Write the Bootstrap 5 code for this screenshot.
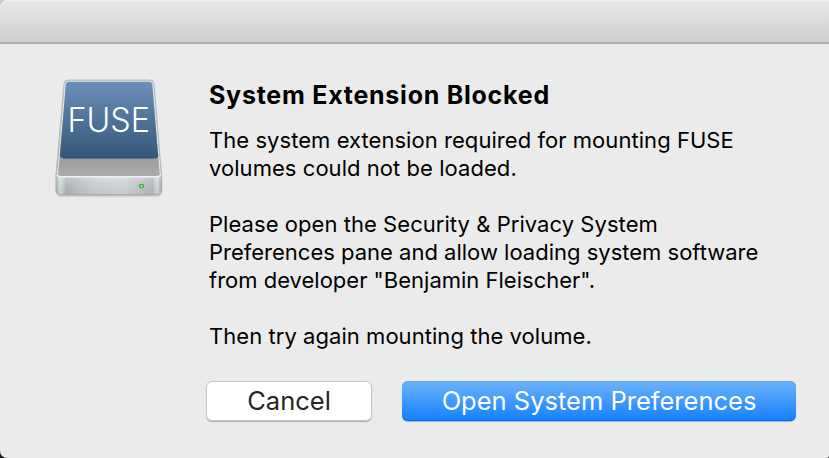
<!DOCTYPE html>
<html lang="en">
<head>
<meta charset="utf-8">
<meta name="viewport" content="width=device-width, initial-scale=1">
<title>System Extension Blocked</title>
<link href="https://cdn.jsdelivr.net/npm/bootstrap@5.3.0/dist/css/bootstrap.min.css" rel="stylesheet">
<style>
body{background:#1b1c24;font-family:Inter,"Liberation Sans",sans-serif;color:#000}
.dialog-window{height:458px;background:#ebebeb;border-radius:7px 0 2px 7px}
.title-strip{height:44px;flex:none;background:linear-gradient(#f4f3f4 0,#e8e6e8 2px,#d1cfd1 41px,#d1cfd1 42px,#b1afb1 42px,#b1afb1 44px)}
.corner-back{background:linear-gradient(#c8c8c8 50%,#1b1c24 50%)}
.dialog-body{padding:32px 33px 0 50px}
.drive-icon{width:118px;height:126px;flex:none}
.message{margin-left:41px;padding-top:4px}
.heading{font-size:25px;line-height:30px;font-weight:700;letter-spacing:.75px;margin:0 0 16px;white-space:nowrap}
.copy{font-size:22px;line-height:28px;letter-spacing:.05px;margin:0 0 28px;white-space:nowrap}
.copy span{display:block}
.copy .snug{letter-spacing:0}
.actions{margin:31px 33px 0 206px;gap:30px}
.btn-mac{height:40px;padding:0;border:0;border-radius:6px;font-size:25.5px;line-height:40px}
.btn-cancel,.btn-cancel:hover{width:166px;background:#fff;color:#262626;box-shadow:inset 0 0 0 1px #c6c6c6,0 1px 1px #aaa}
.btn-open,.btn-open:hover{width:394px;color:#fff;background:linear-gradient(#6cb3fa,#1480ff);box-shadow:inset 0 1px 0 #5da5ee,inset 0 -1px 0 #0a62f8,0 1px 1px #9fb4d4}
</style>
</head>
<body>
<main class="corner-back">
<div class="dialog-window d-flex flex-column overflow-hidden">
  <header class="title-strip"></header>
  <div class="dialog-body d-flex align-items-start">
    <svg class="drive-icon" viewBox="50 76 118 126" role="img" aria-label="FUSE drive">
      <defs>
        <linearGradient id="label" x2="0" y2="1"><stop stop-color="#6b8fb9"/><stop offset="1" stop-color="#355679"/></linearGradient>
        <linearGradient id="top" x2="0" y2="1"><stop stop-color="#d3d5d5"/><stop offset=".75" stop-color="#999"/><stop offset="1" stop-color="#acacac"/></linearGradient>
        <linearGradient id="front"><stop stop-color="#a4acaf"/><stop offset=".04" stop-color="#dce2e4"/><stop offset=".1" stop-color="#adb6ba"/><stop offset=".35" stop-color="#cbd2d5"/><stop offset=".65" stop-color="#d6dadc"/><stop offset=".91" stop-color="#b6babd"/><stop offset=".96" stop-color="#e0e2e3"/><stop offset="1" stop-color="#9a9fa2"/></linearGradient>
        <linearGradient id="shade" x2="0" y2="1"><stop stop-color="#fff" stop-opacity=".3"/><stop offset="1" stop-color="#888" stop-opacity=".18"/></linearGradient>
        <filter id="soft" x="-10%" y="-50%" width="120%" height="250%"><feGaussianBlur stdDeviation="1.1"/></filter>
      </defs>
      <rect x="57" y="187" width="104" height="9" rx="4" fill="#888" opacity=".65" filter="url(#soft)"/>
      <path d="M68 80H150Q153.500 80 154 83.500L161.500 174V178H56V174L64 83.500Q64.500 80 68 80Z" fill="url(#top)" stroke="#b9bdbd" stroke-width="1"/>
      <path d="M65.500 84L57.500 174M152.700 84L160.300 174" stroke="#e1e5e5" stroke-width="1.200" fill="none"/>
      <path d="M68 80.800H150" stroke="#bcc5c9" stroke-width="1"/>
      <path d="M68.500 82H149.500Q152 82 152.300 84.500L158 154.500Q158.200 158 155 158H63Q59.800 158 60 154.500L65.800 84.500Q66 82 68.500 82Z" fill="url(#label)"/>
      <path d="M63 158H155Q158.200 158 158 154.500" fill="none" stroke="#294e77" stroke-width="1"/>
      <path d="M56 174Q58 176.500 61 176.500H157Q160 176.500 161.800 174V190Q161.500 194.500 157 194.500H60.500Q56 194.500 55.800 190Z" fill="url(#front)"/>
      <path d="M56 174Q58 176.500 61 176.500H157Q160 176.500 161.800 174V190Q161.500 194.500 157 194.500H60.500Q56 194.500 55.800 190Z" fill="url(#shade)" stroke="#9da3a5" stroke-width=".6"/>
      <path d="M56.500 174.500Q58 176.800 61 176.800H157Q160 176.800 161.300 174.500" fill="none" stroke="#eef1f1" stroke-width="1.600"/>
      <ellipse cx="141.500" cy="186" rx="2.600" ry="2.300" fill="#45a647"/><circle cx="141.500" cy="186" r="1.200" fill="#8eff79"/>
      <text x="67.400" y="131.700" font-family="Inter,sans-serif" font-size="33.500" font-weight="300" fill="#fff" textLength="82.500" lengthAdjust="spacingAndGlyphs">FUSE</text>
    </svg>
    <section class="message">
      <h1 class="heading">System Extension Blocked</h1>
      <p class="copy"><span>The system extension required for mounting FUSE</span><span>volumes could not be loaded.</span></p>
      <p class="copy"><span>Please open the Security &amp; Privacy System</span><span class="snug">Preferences pane and allow loading system software</span><span class="snug">from developer "Benjamin Fleischer".</span></p>
      <p class="copy mb-0">Then try again mounting the volume.</p>
    </section>
  </div>
  <footer class="actions d-flex">
    <button class="btn btn-mac btn-cancel" type="button">Cancel</button>
    <button class="btn btn-mac btn-open" type="button">Open System Preferences</button>
  </footer>
</div>
</main>
<script src="https://cdn.jsdelivr.net/npm/bootstrap@5.3.0/dist/js/bootstrap.bundle.min.js"></script>
</body>
</html>
